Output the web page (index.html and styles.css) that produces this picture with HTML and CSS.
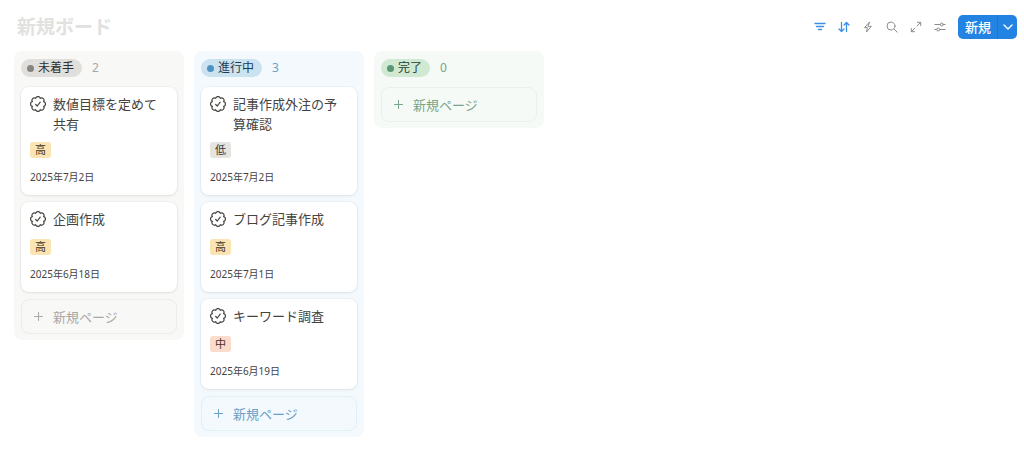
FILE: index.html
```html
<!DOCTYPE html>
<html lang="ja">
<head>
<meta charset="utf-8">
<meta name="viewport" content="width=device-width, initial-scale=1">
<title>新規ボード</title>
<link rel="stylesheet" href="styles.css">
</head>
<body>
<svg class="defs" aria-hidden="true">
  <symbol id="badge" viewBox="0 0 16 16">
    <path d="M10.33 2.36A2.4 2.4 0 0 1 13.64 5.67A2.4 2.4 0 0 1 13.64 10.33A2.4 2.4 0 0 1 10.33 13.64A2.4 2.4 0 0 1 5.67 13.64A2.4 2.4 0 0 1 2.36 10.33A2.4 2.4 0 0 1 2.36 5.67A2.4 2.4 0 0 1 5.67 2.36A2.4 2.4 0 0 1 10.33 2.36Z"/>
    <path d="M5.7 8.500L7.300 10L10.200 6.200"/>
  </symbol>
  <symbol id="plus" viewBox="0 0 10 10"><path d="M4.500 .5V8.500M.5 4.500H8.500"/></symbol>
</svg>
<header class="topbar">
  <h1 class="title">新規ボード</h1>
  <div class="tools">
    <button class="tool active" aria-label="フィルター"><svg viewBox="0 0 12 12"><path d="M1 2.500H11M2.500 5.500H9.500M4.500 8.500H7.500"/></svg></button>
    <button class="tool active" aria-label="並べ替え"><svg viewBox="0 0 12 12"><path d="M3.500 1.500V10.500M1 8L3.500 10.500L6 8M8.500 10.500V1.500M6 4L8.500 1.500L11 4"/></svg></button>
    <button class="tool" aria-label="自動化"><svg viewBox="0 0 12 12"><path d="M7.300 1.200L2.500 6.600H5.400L4.500 11L9.300 5.300H6.400Z"/></svg></button>
    <button class="tool" aria-label="検索"><svg viewBox="0 0 12 12"><circle cx="5" cy="5" r="4"/><path d="M8 8L11.200 11.200"/></svg></button>
    <button class="tool" aria-label="全画面"><svg viewBox="0 0 12 12"><path d="M7 5L10.700 1.300M7.500 1.300H10.700V4.500M5 7L1.300 10.700M1.300 7.500V10.700H4.500"/></svg></button>
    <button class="tool" aria-label="設定"><svg viewBox="0 0 12 12"><path d="M.8 3.500H6.300M9.300 3.500H11.200M.8 8.500H2.700M5.700 8.500H11.200"/><circle cx="7.800" cy="3.500" r="1.500"/><circle cx="4.200" cy="8.500" r="1.500"/></svg></button>
    <div class="create">
      <button class="create-main">新規</button>
      <button class="create-more" aria-label="その他"><svg viewBox="0 0 10 10"><path d="M1 3L5 7L9 3"/></svg></button>
    </div>
  </div>
</header>
<main class="board">
  <section class="column gray">
    <header class="column-head"><h2 class="status">未着手</h2><span class="count">2</span></header>
    <article class="card">
      <h3 class="card-title"><svg><use href="#badge"/></svg><span>数値目標を定めて共有</span></h3>
      <span class="tag high">高</span>
      <time class="date" datetime="2025-07-02">2025年7月2日</time>
    </article>
    <article class="card">
      <h3 class="card-title"><svg><use href="#badge"/></svg><span>企画作成</span></h3>
      <span class="tag high">高</span>
      <time class="date" datetime="2025-06-18">2025年6月18日</time>
    </article>
    <button class="new-page"><svg><use href="#plus"/></svg>新規ページ</button>
  </section>
  <section class="column blue">
    <header class="column-head"><h2 class="status">進行中</h2><span class="count">3</span></header>
    <article class="card">
      <h3 class="card-title"><svg><use href="#badge"/></svg><span>記事作成外注の予算確認</span></h3>
      <span class="tag low">低</span>
      <time class="date" datetime="2025-07-02">2025年7月2日</time>
    </article>
    <article class="card">
      <h3 class="card-title"><svg><use href="#badge"/></svg><span>ブログ記事作成</span></h3>
      <span class="tag high">高</span>
      <time class="date" datetime="2025-07-01">2025年7月1日</time>
    </article>
    <article class="card">
      <h3 class="card-title"><svg><use href="#badge"/></svg><span>キーワード調査</span></h3>
      <span class="tag mid">中</span>
      <time class="date" datetime="2025-06-19">2025年6月19日</time>
    </article>
    <button class="new-page"><svg><use href="#plus"/></svg>新規ページ</button>
  </section>
  <section class="column green">
    <header class="column-head"><h2 class="status">完了</h2><span class="count">0</span></header>
    <button class="new-page"><svg><use href="#plus"/></svg>新規ページ</button>
  </section>
</main>
</body>
</html>
```

FILE: styles.css
```css
* { box-sizing: border-box; }

body {
  margin: 0;
  background: #fff;
  color: #45433f;
  font-family: "Noto Sans", "Noto Sans CJK JP", sans-serif;
  font-size: 13px;
  line-height: 20px;
}

h1, h2, h3 { margin: 0; font-weight: 400; }

button {
  margin: 0;
  padding: 0;
  border: 0;
  background: none;
  color: inherit;
  font: inherit;
  cursor: pointer;
}

svg {
  flex: none;
  fill: none;
  stroke: currentColor;
  stroke-linecap: round;
  stroke-linejoin: round;
}

.defs { position: absolute; width: 0; height: 0; }

.topbar {
  display: flex;
  align-items: center;
  justify-content: space-between;
  padding: 13px 7px 10px 17px;
}

.title {
  color: #e1e1e0;
  font-size: 19px;
  font-weight: 700;
  line-height: 28px;
}

.tools { display: flex; align-items: center; gap: 12px; }
.tool { display: flex; color: #8e8d8a; }
.tool svg { width: 12px; height: 12px; }
.tool.active { color: #3b8fe6; }
.tool.active svg { stroke-width: 1.300; }

.create {
  display: flex;
  height: 24px;
  overflow: hidden;
  border-radius: 5px;
  background: #2383e2;
  color: #fff;
}

.create-main { padding: 0 6px 0 7px; font-weight: 500; }

.create-more {
  display: flex;
  align-items: center;
  justify-content: center;
  width: 20px;
  border-left: 1px solid #1f76cc;
}

.create-more svg { width: 10px; height: 10px; stroke-width: 1.400; }

.board {
  display: flex;
  align-items: flex-start;
  gap: 10px;
  padding: 0 14px 23px;
}

.column {
  display: flex;
  flex: 0 0 170px;
  flex-direction: column;
  gap: 7px;
  padding: 7px 7px 6px;
  border-radius: 8px;
  background: var(--bg);
}

.gray { --bg: #f8f8f7; --pill: #e0dfdc; --dot: #868581; --text: #2f2e2b; --soft: #a9a8a5; --line: #ececea; }
.blue { --bg: #f3f9fd; --pill: #cbe3f1; --dot: #4f93c1; --text: #1f3b52; --soft: #6a9fc6; --line: #e2eff5; }
.green { --bg: #f5faf6; --pill: #d1e8d3; --dot: #5b9774; --text: #243d30; --soft: #77a58b; --line: #e8f2ea; }

.column-head {
  display: flex;
  align-items: center;
  gap: 10px;
  height: 20px;
  margin-bottom: 2px;
}

.status {
  display: flex;
  align-items: center;
  gap: 4px;
  padding: 0 8px 0 6px;
  border-radius: 9px;
  background: var(--pill);
  color: var(--text);
  font-size: 12px;
  line-height: 18px;
}

.status::before {
  width: 7px;
  height: 7px;
  border-radius: 50%;
  background: var(--dot);
  content: "";
}

.count { color: var(--soft); font-size: 12px; }

.card {
  display: flex;
  flex-direction: column;
  align-items: flex-start;
  padding: 7px 9px 9px;
  border-radius: 8px;
  background: #fff;
  box-shadow: 0 1px 3px rgba(25, 25, 25, .08), 0 0 0 1px rgba(25, 25, 25, .03);
}

.card-title {
  display: flex;
  gap: 7px;
  min-height: 22px;
  font-size: 13px;
}

.card-title svg { width: 16px; height: 16px; margin-top: 2px; stroke-width: 1.200; }

.tag {
  margin: 8px 0 10px;
  padding: 0 5px;
  border-radius: 3px;
  font-size: 11px;
  line-height: 16px;
}

.high { background: #f9e4b2; color: #453522; }
.mid { background: #f9dccb; color: #50301d; }
.low { background: #e5e4e1; color: #373530; }

.date { font-size: 10px; line-height: 18px; }

.new-page {
  display: flex;
  align-items: center;
  gap: 9px;
  height: 35px;
  padding: 0 12px;
  border: 1px solid var(--line);
  border-radius: 8px;
  color: var(--soft);
}

.new-page svg { width: 10px; height: 10px; }
```
